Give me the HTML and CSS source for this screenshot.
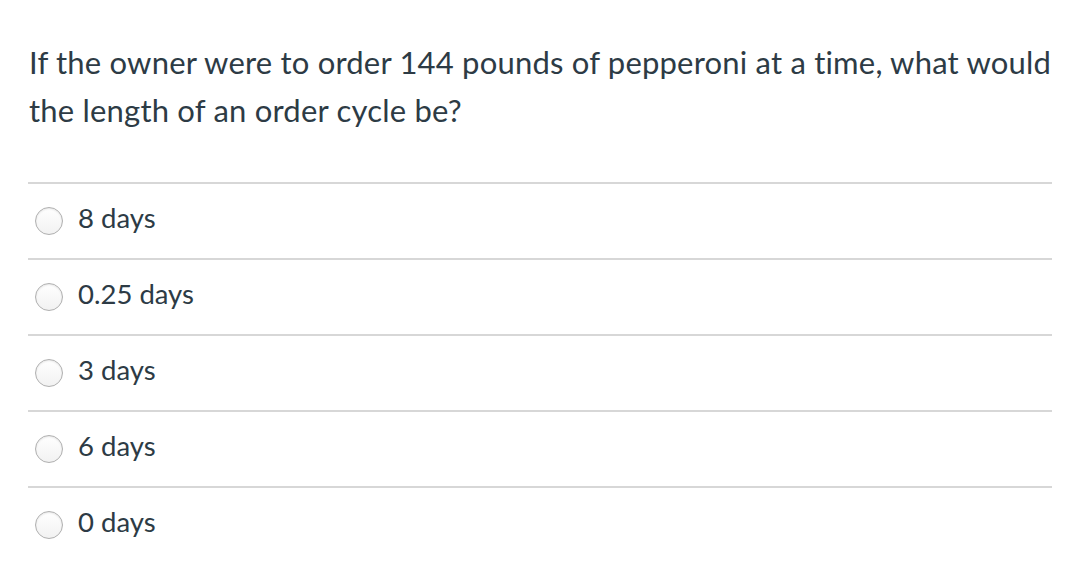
FILE: index.html
```html
<!DOCTYPE html>
<html>
<head>
<meta charset="utf-8">
<link rel="stylesheet" href="styles.css">
</head>
<body>
<div class="quiz">
  <p class="question">If the owner were to order 144 pounds of pepperoni at a time, what would the length of an order cycle be?</p>
  <div class="answers">
    <div class="answer"><span class="radio"></span><span class="label">8 days</span></div>
    <div class="answer"><span class="radio"></span><span class="label">0.25 days</span></div>
    <div class="answer"><span class="radio"></span><span class="label">3 days</span></div>
    <div class="answer"><span class="radio"></span><span class="label">6 days</span></div>
    <div class="answer last"><span class="radio"></span><span class="label">0 days</span></div>
  </div>
</div>
</body>
</html>
```
FILE: styles.css
```css
html, body {
  margin: 0;
  padding: 0;
  background: #ffffff;
}
body {
  font-family: Lato, "Open Sans", sans-serif;
  color: #2d3b45;
}
.quiz {
  padding: 38px 26px 0 28px;
}
.question {
  margin: 0;
  font-size: 31px;
  letter-spacing: 0.2px;
  line-height: 48px;
  padding-left: 1px;
}
.answers {
  margin-top: 48px;
  border-top: 2px solid #d7d7d7;
}
.answer {
  display: flex;
  align-items: center;
  height: 74px;
  border-bottom: 2px solid #d7d7d7;
}
.answer.last {
  border-bottom: none;
}
.radio {
  width: 26px;
  height: 26px;
  border-radius: 50%;
  border: 1px solid #b0b0b0;
  background: linear-gradient(#ffffff, #f2f2f2);
  box-shadow: inset 0 1px 2px rgba(0,0,0,0.10);
  margin-left: 7px;
  margin-right: 15px;
  flex: none;
}
.label {
  font-size: 27.5px;
  margin-bottom: 8px;
}
```
